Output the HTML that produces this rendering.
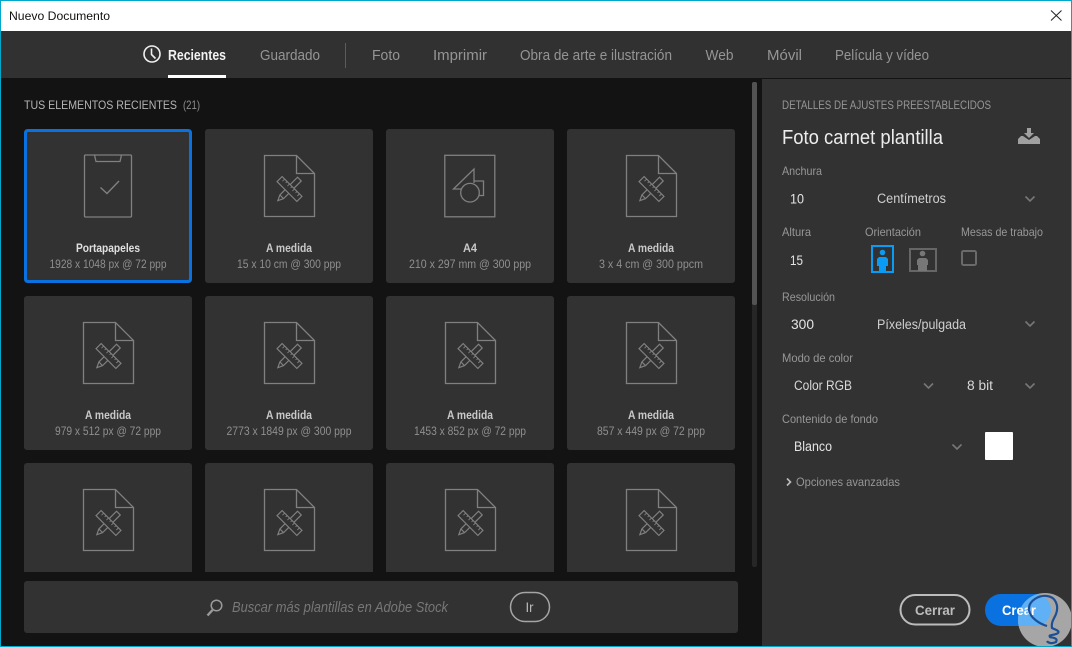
<!DOCTYPE html>
<html><head><meta charset="utf-8"><title>Nuevo Documento</title>
<style>
html,body{margin:0;padding:0;background:#131313;overflow:hidden}
svg{display:block}
text{font-family:"Liberation Sans",sans-serif;font-size:12px;fill:#999}
.t{fill:#c8c8c8;font-weight:bold;font-size:11.5px;text-anchor:middle}
.s{fill:#8f8f8f;font-size:12px;text-anchor:middle}
.tab{font-size:14.5px;fill:#959595}
.l{font-size:12px;fill:#979797}
.v{font-size:13.5px;fill:#e4e4e4}
.ic{fill:none;stroke:#808080;stroke-width:1.3}
.ch{fill:none;stroke:#777;stroke-width:1.6}
</style></head><body>
<svg width="1072" height="647" viewBox="0 0 1072 647" xmlns="http://www.w3.org/2000/svg">
<defs>
<g id="doc" class="ic">
  <path d="M0.5 0.5H32.5L50.5 18.5V61.5H0.5Z"/>
  <path d="M32.5 0.5V18.5H50.5"/>
  <g transform="translate(25.5 34) rotate(-45)"><path d="M-16.5 0L-11 -2.6H14V2.6H-11Z" stroke-width="1.2"/><path d="M-11 -2.6V2.6" stroke-width="1.2"/></g>
  <g transform="translate(25.5 34) rotate(45)"><rect x="-14" y="-3.6" width="28" height="7.2" fill="#323232" stroke-width="1.2"/><path d="M-10.5 -3.6v3M-7 -3.6v2M-3.5 -3.6v3M0 -3.6v2M3.5 -3.6v3M7 -3.6v2M10.5 -3.6v3" stroke-width=".9"/></g>
</g>
<clipPath id="rowclip"><rect x="0" y="463" width="760" height="109"/></clipPath>
<clipPath id="wm"><circle cx="1045" cy="620" r="27"/></clipPath>
</defs>

<rect width="1072" height="647" fill="#131313"/>
<!-- title bar -->
<rect x="0" y="0" width="1072" height="31" fill="#fff"/>
<text x="9" y="20" style="font-size:12px;fill:#111" textLength="101" lengthAdjust="spacingAndGlyphs">Nuevo Documento</text>
<path d="M1051 10.5L1061.5 20.5M1061.5 10.5L1051 20.5" stroke="#222" stroke-width="1" fill="none"/>
<!-- tabs -->
<rect x="0" y="31" width="1072" height="47" fill="#313131"/>
<circle cx="152" cy="54" r="8" fill="none" stroke="#f0f0f0" stroke-width="1.6"/>
<path d="M151.5 48.5V54.5L155.5 58.5" fill="none" stroke="#f0f0f0" stroke-width="1.6"/>
<text x="168" y="60" class="tab" style="fill:#f2f2f2;font-weight:bold" textLength="58" lengthAdjust="spacingAndGlyphs">Recientes</text>
<rect x="168" y="75" width="58" height="3" fill="#fff"/>
<text x="260" y="60" class="tab" textLength="60" lengthAdjust="spacingAndGlyphs">Guardado</text>
<rect x="345" y="43" width="1" height="25" fill="#5c5c5c"/>
<text x="372" y="60" class="tab" textLength="28" lengthAdjust="spacingAndGlyphs">Foto</text>
<text x="433" y="60" class="tab" textLength="54" lengthAdjust="spacingAndGlyphs">Imprimir</text>
<text x="520" y="60" class="tab" textLength="152" lengthAdjust="spacingAndGlyphs">Obra de arte e ilustración</text>
<text x="705.5" y="60" class="tab" textLength="28" lengthAdjust="spacingAndGlyphs">Web</text>
<text x="767" y="60" class="tab" textLength="35" lengthAdjust="spacingAndGlyphs">Móvil</text>
<text x="835" y="60" class="tab" textLength="94" lengthAdjust="spacingAndGlyphs">Película y vídeo</text>

<!-- left header -->
<text x="24" y="109" style="font-size:11.5px;fill:#b5b5b5" textLength="153" lengthAdjust="spacingAndGlyphs">TUS ELEMENTOS RECIENTES</text>
<text x="183" y="109" style="font-size:12px;fill:#8f8f8f" textLength="17" lengthAdjust="spacingAndGlyphs">(21)</text>

<!-- cards -->
<g fill="#323232">
<rect x="24" y="129" width="168" height="154" rx="3"/><rect x="205" y="129" width="168" height="154" rx="3"/><rect x="386" y="129" width="168" height="154" rx="3"/><rect x="567" y="129" width="168" height="154" rx="3"/>
<rect x="24" y="296" width="168" height="154" rx="3"/><rect x="205" y="296" width="168" height="154" rx="3"/><rect x="386" y="296" width="168" height="154" rx="3"/><rect x="567" y="296" width="168" height="154" rx="3"/>
<g clip-path="url(#rowclip)">
<rect x="24" y="463" width="168" height="154" rx="3"/><rect x="205" y="463" width="168" height="154" rx="3"/><rect x="386" y="463" width="168" height="154" rx="3"/><rect x="567" y="463" width="168" height="154" rx="3"/>
</g>
</g>
<rect x="25.5" y="130.5" width="165" height="151" rx="2.5" fill="none" stroke="#0a72e0" stroke-width="3"/>

<!-- clipboard icon -->
<g class="ic">
  <rect x="84.5" y="155" width="47" height="62" rx="1"/>
  <path d="M94.5 155L96 161.5H120L121.5 155"/>
  <path d="M100.5 187.5L107 193.5L119 181" stroke-width="1.4"/>
</g>
<!-- A4 icon -->
<g class="ic">
  <rect x="444.8" y="155.3" width="50" height="61.5"/>
  <path d="M461.5 189H453.5L474 169V183"/>
  <path d="M474 181H483.5V195.5H478.5"/>
  <circle cx="470" cy="192.7" r="9.3"/>
</g>
<use href="#doc" x="264" y="155"/>
<use href="#doc" x="626" y="155"/>
<use href="#doc" x="83" y="322"/><use href="#doc" x="264" y="322"/><use href="#doc" x="445" y="322"/><use href="#doc" x="626" y="322"/>
<use href="#doc" x="83" y="489"/><use href="#doc" x="264" y="489"/><use href="#doc" x="445" y="489"/><use href="#doc" x="626" y="489"/>

<!-- card text -->
<text x="108" y="252" class="t" style="fill:#e0e0e0" textLength="64" lengthAdjust="spacingAndGlyphs">Portapapeles</text>
<text x="108" y="268" class="s" textLength="117" lengthAdjust="spacingAndGlyphs">1928 x 1048 px @ 72 ppp</text>
<text x="289" y="252" class="t" textLength="46" lengthAdjust="spacingAndGlyphs">A medida</text>
<text x="289" y="268" class="s" textLength="104" lengthAdjust="spacingAndGlyphs">15 x 10 cm @ 300 ppp</text>
<text x="470" y="252" class="t" textLength="14" lengthAdjust="spacingAndGlyphs">A4</text>
<text x="470" y="268" class="s" textLength="122" lengthAdjust="spacingAndGlyphs">210 x 297 mm @ 300 ppp</text>
<text x="651" y="252" class="t" textLength="46" lengthAdjust="spacingAndGlyphs">A medida</text>
<text x="651" y="268" class="s" textLength="104" lengthAdjust="spacingAndGlyphs">3 x 4 cm @ 300 ppcm</text>

<text x="108" y="419" class="t" textLength="46" lengthAdjust="spacingAndGlyphs">A medida</text>
<text x="108" y="435" class="s" textLength="106" lengthAdjust="spacingAndGlyphs">979 x 512 px @ 72 ppp</text>
<text x="289" y="419" class="t" textLength="46" lengthAdjust="spacingAndGlyphs">A medida</text>
<text x="289" y="435" class="s" textLength="125" lengthAdjust="spacingAndGlyphs">2773 x 1849 px @ 300 ppp</text>
<text x="470" y="419" class="t" textLength="46" lengthAdjust="spacingAndGlyphs">A medida</text>
<text x="470" y="435" class="s" textLength="112" lengthAdjust="spacingAndGlyphs">1453 x 852 px @ 72 ppp</text>
<text x="651" y="419" class="t" textLength="46" lengthAdjust="spacingAndGlyphs">A medida</text>
<text x="651" y="435" class="s" textLength="108" lengthAdjust="spacingAndGlyphs">857 x 449 px @ 72 ppp</text>

<!-- scrollbar -->
<rect x="752" y="82" width="5" height="485" rx="2" fill="#262626"/>
<rect x="752" y="82" width="5" height="223" rx="2" fill="#535353"/>

<!-- search bar -->
<rect x="24" y="581" width="714" height="52" rx="3" fill="#323232"/>
<circle cx="216.5" cy="605.5" r="5.3" fill="none" stroke="#9a9a9a" stroke-width="1.5"/>
<path d="M212.5 610L207.5 615.5" stroke="#9a9a9a" stroke-width="2.4" fill="none"/>
<text x="232" y="612" style="font-size:14.5px;font-style:italic;fill:#777" textLength="216" lengthAdjust="spacingAndGlyphs">Buscar más plantillas en Adobe Stock</text>
<rect x="510.5" y="592.5" width="39" height="29" rx="14.5" fill="none" stroke="#a5a5a5" stroke-width="1.5"/>
<text x="525.5" y="612" style="font-size:13.5px;fill:#bbb" textLength="8" lengthAdjust="spacingAndGlyphs">Ir</text>

<!-- right panel -->
<rect x="762" y="79" width="309" height="568" fill="#323232"/>
<text x="782" y="109" style="font-size:11.5px;fill:#969696" textLength="209" lengthAdjust="spacingAndGlyphs">DETALLES DE AJUSTES PREESTABLECIDOS</text>
<text x="782" y="144" style="font-size:20px;fill:#ececec" textLength="161" lengthAdjust="spacingAndGlyphs">Foto carnet plantilla</text>
<path d="M1027 128h4v5h3l-5 5-5-5h3z" fill="#a0a0a0"/>
<path d="M1018 144v-5l3-3h2l6 4 6-4h2l3 3v5z" fill="#a0a0a0"/>

<text x="782" y="175" class="l" textLength="40" lengthAdjust="spacingAndGlyphs">Anchura</text>
<text x="790" y="203.500" class="v" textLength="14" lengthAdjust="spacingAndGlyphs">10</text>
<text x="877" y="203" class="v" style="fill:#cfcfcf" textLength="69" lengthAdjust="spacingAndGlyphs">Centímetros</text>
<path d="M1025.5 196.5l4.5 4.5 4.5-4.500" class="ch"/>

<text x="782" y="236" class="l" textLength="29" lengthAdjust="spacingAndGlyphs">Altura</text>
<text x="865" y="236" class="l" textLength="56" lengthAdjust="spacingAndGlyphs">Orientación</text>
<text x="961" y="236" class="l" textLength="82" lengthAdjust="spacingAndGlyphs">Mesas de trabajo</text>
<text x="790" y="265" class="v" textLength="13" lengthAdjust="spacingAndGlyphs">15</text>

<rect x="872" y="246" width="21" height="26" fill="none" stroke="#0a9bf5" stroke-width="2"/>
<circle cx="882.5" cy="252.5" r="2.800" fill="#0a9bf5"/>
<path d="M879 257h7l2 2v7h-2v6h-7v-6h-2v-7z" fill="#0a9bf5"/>
<rect x="910" y="249" width="26" height="22" fill="none" stroke="#666" stroke-width="2"/>
<circle cx="922.5" cy="253.5" r="2.800" fill="#777"/>
<path d="M919 258h7l2 2v5h-1v6h-9v-6h-1v-5z" fill="#777"/>
<rect x="962" y="251" width="14" height="14" rx="1.500" fill="none" stroke="#6a6a6a" stroke-width="2"/>

<text x="782" y="301" class="l" textLength="53" lengthAdjust="spacingAndGlyphs">Resolución</text>
<text x="791" y="329" class="v" textLength="23" lengthAdjust="spacingAndGlyphs">300</text>
<text x="877" y="329" class="v" style="fill:#cfcfcf" textLength="89" lengthAdjust="spacingAndGlyphs">Píxeles/pulgada</text>
<path d="M1025.5 321.5l4.5 4.5 4.5-4.500" class="ch"/>

<text x="782" y="362" class="l" textLength="71" lengthAdjust="spacingAndGlyphs">Modo de color</text>
<text x="794" y="390" class="v" style="fill:#d8d8d8" textLength="58" lengthAdjust="spacingAndGlyphs">Color RGB</text>
<path d="M924 383.5l4.5 4.5 4.5-4.500" class="ch"/>
<text x="967" y="390" class="v" style="fill:#d8d8d8" textLength="26" lengthAdjust="spacingAndGlyphs">8 bit</text>
<path d="M1025.5 383.5l4.5 4.5 4.5-4.500" class="ch"/>

<text x="782" y="423" class="l" textLength="96" lengthAdjust="spacingAndGlyphs">Contenido de fondo</text>
<text x="794" y="451" class="v" textLength="38" lengthAdjust="spacingAndGlyphs">Blanco</text>
<path d="M952.5 444.5l4.5 4.5 4.5-4.500" class="ch"/>
<rect x="985" y="432" width="28" height="28" rx="1" fill="#fff"/>
<path d="M787 478.5l3.5 3.5-3.5 3.500" fill="none" stroke="#bbb" stroke-width="1.6"/>
<text x="796" y="486" class="l" textLength="104" lengthAdjust="spacingAndGlyphs">Opciones avanzadas</text>

<!-- buttons -->
<rect x="900.5" y="595" width="69" height="29.5" rx="14.7" fill="none" stroke="#bcbcbc" stroke-width="2"/>
<text x="915" y="615" style="font-size:13.5px;font-weight:bold;fill:#bcbcbc" textLength="40" lengthAdjust="spacingAndGlyphs">Cerrar</text>
<rect x="985" y="594" width="66" height="32" rx="16" fill="#0a72e0"/>

<!-- watermark -->
<circle cx="1045" cy="620" r="27" fill="#a6a6a6"/>
<g clip-path="url(#wm)"><rect x="985" y="594" width="66" height="32" rx="16" fill="#5fb0f5"/></g>
<text x="1002" y="615" style="font-size:13.5px;font-weight:bold;fill:#fff" textLength="34" lengthAdjust="spacingAndGlyphs">Crear</text>
<path d="M1047 626C1040 624 1030 618 1029 610C1028 600 1040 595 1047 596C1056 597 1059 606 1056 614C1054 619 1051 622 1052 628C1056 630 1060 631 1058 633C1054 636 1048 634 1050 637C1054 638 1058 638 1056 642C1052 644 1048 643 1047 641" fill="none" stroke="#1d4f94" stroke-width="2.200"/>

<!-- window border -->
<rect x="0" y="0" width="1072" height="1" fill="#00a8cc"/>
<rect x="0" y="0" width="1" height="647" fill="#00a8cc"/>
<rect x="1071" y="0" width="1" height="647" fill="#00a8cc"/>
<rect x="0" y="646" width="1072" height="1" fill="#00a8cc"/>
</svg>
</body></html>
